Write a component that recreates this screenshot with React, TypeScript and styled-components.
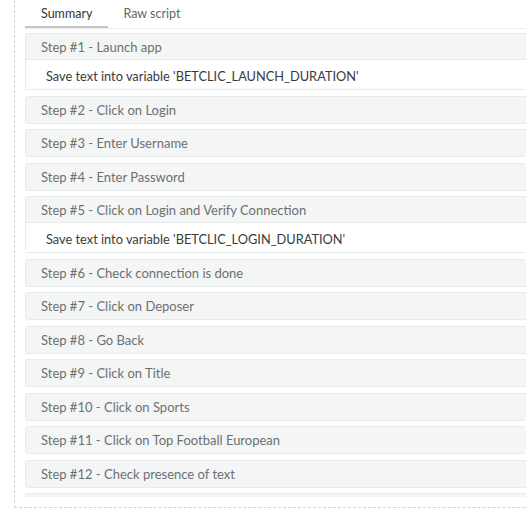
import React from "react";
import styled, { createGlobalStyle } from "styled-components";

const Global = createGlobalStyle`
  html, body {
    margin: 0;
    padding: 0;
    overflow: hidden;
    background: #ffffff;
    font-family: Lato, "Liberation Sans", sans-serif;
  }
`;

const Frame = styled.div`
  margin-left: 14px;
  width: 640px;
  border-left: 1px dashed #c8d6da;
  border-bottom: 1px dashed #c8d6da;
  padding: 0 0 10px 10px;
  box-sizing: content-box;
`;

const TabBar = styled.div`
  display: flex;
  height: 28px;
  border-bottom: 1px solid #eceeee;
`;

const Tab = styled.div<{ $active?: boolean }>`
  box-sizing: border-box;
  height: 28px;
  padding: 1px ${(p) => (p.$active ? 16 : 15)}px 0;
  display: flex;
  align-items: center;
  font-size: 12.5px;
  color: ${(p) => (p.$active ? "#333333" : "#666666")};
  border-bottom: 2px solid ${(p) => (p.$active ? "#c6c8c8" : "transparent")};
`;

const List = styled.div`
  height: 468px;
  overflow: hidden;
  padding-top: 4px;
  box-sizing: border-box;
  display: flex;
  flex-direction: column;
  gap: 5.5px;
`;

const Card = styled.div`
  flex-shrink: 0;
  border: 1px solid #e7ebeb;
  border-radius: 2px;
  background: #ffffff;
`;

const Header = styled.div<{ $hasBody?: boolean }>`
  height: 26px;
  box-sizing: border-box;
  padding: 0 15px;
  display: flex;
  align-items: center;
  background: #f4f6f6;
  font-size: 13px;
  font-weight: 400;
  color: #6c7070;
  border-bottom: ${(p) => (p.$hasBody ? "1px solid #e7ebeb" : "none")};
`;

const Body = styled.div`
  height: 29px;
  box-sizing: border-box;
  padding: 2px 20px 0;
  display: flex;
  align-items: center;
  font-size: 12.8px;
  color: #3a3a3a;
`;

type Step = { title: string; save?: string };

const steps: Step[] = [
  { title: "Step #1 - Launch app", save: "Save text into variable 'BETCLIC_LAUNCH_DURATION'" },
  { title: "Step #2 - Click on Login" },
  { title: "Step #3 - Enter Username" },
  { title: "Step #4 - Enter Password" },
  { title: "Step #5 - Click on Login and Verify Connection", save: "Save text into variable 'BETCLIC_LOGIN_DURATION'" },
  { title: "Step #6 - Check connection is done" },
  { title: "Step #7 - Click on Deposer" },
  { title: "Step #8 - Go Back" },
  { title: "Step #9 - Click on Title" },
  { title: "Step #10 - Click on Sports" },
  { title: "Step #11 - Click on Top Football European" },
  { title: "Step #12 - Check presence of text" },
  { title: "" },
];

export default function App() {
  return (
    <>
      <Global />
      <Frame>
        <TabBar>
          <Tab $active>Summary</Tab>
          <Tab>Raw script</Tab>
        </TabBar>
        <List>
          {steps.map((s, i) => (
            <Card key={i}>
              <Header $hasBody={!!s.save}>{s.title}</Header>
              {s.save && <Body>{s.save}</Body>}
            </Card>
          ))}
        </List>
      </Frame>
    </>
  );
}
